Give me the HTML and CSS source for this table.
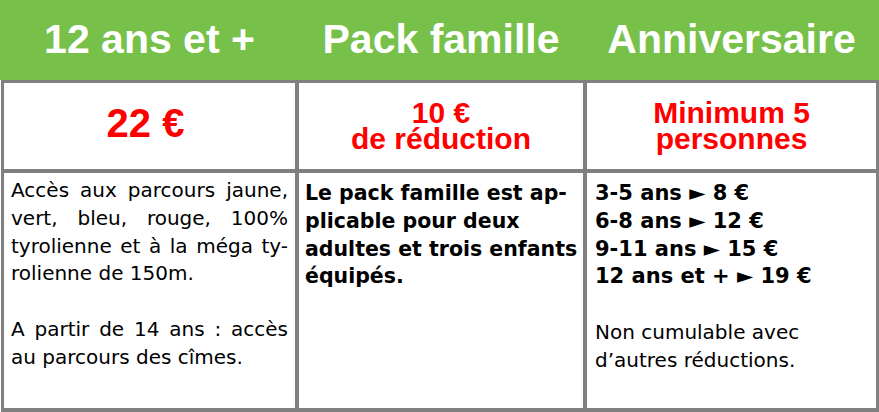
FILE: index.html
```html
<!DOCTYPE html>
<html lang="fr">
<head>
<meta charset="utf-8">
<title>Tarifs</title>
<link rel="stylesheet" href="styles.css">
</head>
<body>
<div class="page">
  <div class="head">
    <div class="hcell">12 ans et +</div>
    <div class="hcell">Pack famille</div>
    <div class="hcell">Anniversaire</div>
  </div>
  <div class="table">
    <div class="price"><div class="big">22 €</div></div>
    <div class="price"><div class="mid"><span class="pl">10 €</span><span class="pl">de réduction</span></div></div>
    <div class="price"><div class="mid"><span class="pl">Minimum 5</span><span class="pl">personnes</span></div></div>

    <div class="desc c1">
      <span class="jl">Accès aux parcours jaune,</span>
      <span class="jl">vert, bleu, rouge, 100%</span>
      <span class="jl">tyrolienne et à la méga ty-</span>
      <span class="ln">rolienne de 150m.</span>
      <span class="jl gap">A partir de 14 ans : accès</span>
      <span class="ln">au parcours des cîmes.</span>
    </div>
    <div class="desc c2 bold">
      <span class="ln">Le pack famille est ap-</span>
      <span class="ln">plicable pour deux</span>
      <span class="ln">adultes et trois enfants</span>
      <span class="ln">équipés.</span>
    </div>
    <div class="desc c3">
      <span class="ln bold">3-5 ans ► 8 €</span>
      <span class="ln bold">6-8 ans ► 12 €</span>
      <span class="ln bold">9-11 ans ► 15 €</span>
      <span class="ln bold">12 ans et + ► 19 €</span>
      <span class="ln gap">Non cumulable avec</span>
      <span class="ln">d’autres réductions.</span>
    </div>
  </div>
</div>
</body>
</html>
```
FILE: styles.css
```css
html, body {
  margin: 0;
  padding: 0;
  background: #ffffff;
}
.page {
  width: 879px;
  height: 412px;
  overflow: hidden;
}
.head {
  height: 80px;
  background: #77c14b;
  display: grid;
  grid-template-columns: 291px 284px 289px;
  column-gap: 4px;
  padding: 0 3px 0 4px;
  box-sizing: border-box;
}
.hcell {
  display: flex;
  align-items: center;
  justify-content: center;
  color: #ffffff;
  font-family: "Liberation Sans", Arial, sans-serif;
  font-weight: bold;
  font-size: 41px;
  white-space: nowrap;
  padding-bottom: 1px;
}
.table {
  margin-left: 1px;
  background: #808080;
  padding: 3px 3px 4px 3px;
  display: grid;
  grid-template-columns: 291px 284px 289px;
  grid-template-rows: 86px 235px;
  gap: 4px;
}
.price {
  background: #ffffff;
  display: flex;
  align-items: center;
  justify-content: center;
  color: #ff0000;
  font-family: "Liberation Sans", Arial, sans-serif;
  font-weight: bold;
  text-align: center;
}
.big {
  font-size: 40px;
  line-height: 46px;
  margin-right: 8px;
  margin-bottom: 6px;
}
.mid {
  font-size: 30px;
  display: flex;
  flex-direction: column;
  align-items: center;
}
.pl {
  display: block;
  height: 26px;
  line-height: 26px;
  white-space: nowrap;
}
.desc {
  background: #ffffff;
  font-family: "DejaVu Sans", "Noto Sans", sans-serif;
  font-size: 20px;
  line-height: 27.8px;
  color: #000000;
  box-sizing: border-box;
}
.c1 { padding: 4px 7px 0 7px; }
.c2 { padding: 7px 2px 0 6px; font-size: 20.5px; }
.c3 { padding: 7px 4px 0 8px; }
.c3 .bold { font-size: 21px; }
.bold { font-weight: bold; }
.jl {
  display: block;
  white-space: nowrap;
  text-align: justify;
  text-align-last: justify;
}
.ln {
  display: block;
  white-space: nowrap;
}
.gap {
  margin-top: 27.8px;
}
```
